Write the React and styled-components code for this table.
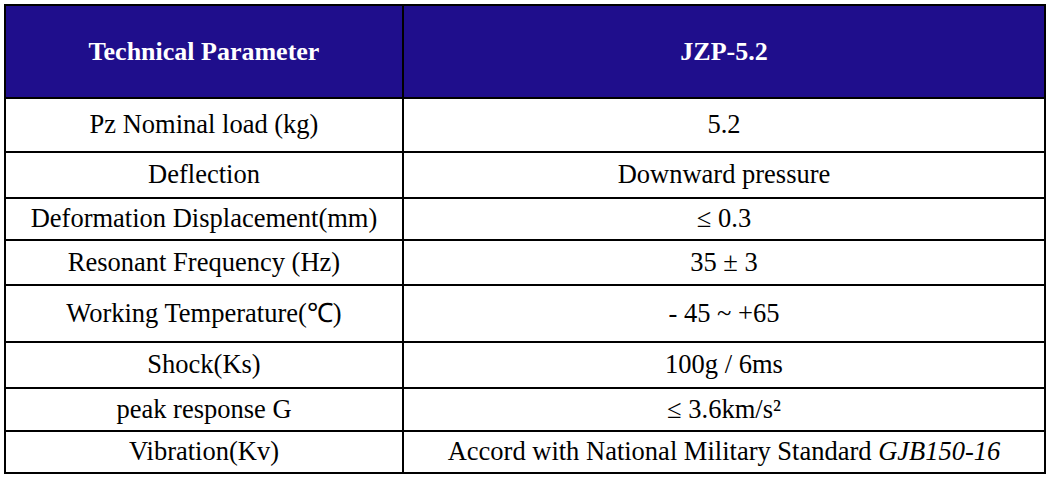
import React from 'react';
import styled, { createGlobalStyle } from 'styled-components';

const serif = '"Liberation Serif", "Times New Roman", serif';

const rows = [
  { label: 'Pz Nominal load (kg)', value: '5.2', height: 54 },
  { label: 'Deflection', value: 'Downward pressure', height: 46 },
  { label: 'Deformation Displacement(mm)', value: '\u2264 0.3', height: 42 },
  { label: 'Resonant Frequency (Hz)', value: '35 \u00b1 3', height: 45 },
  { label: 'Working Temperature(\u2103)', value: '- 45 ~ +65', height: 57 },
  { label: 'Shock(Ks)', value: '100g / 6ms', height: 46 },
  { label: 'peak response G', value: '\u2264 3.6km/s\u00b2', height: 43 },
  {
    label: 'Vibration(Kv)',
    value: (
      <>
        Accord with National Military Standard <em>GJB150-16</em>
      </>
    ),
    height: 42,
  },
];

const App = () => (
  <>
    <GlobalStyle />
    <Page>
      <SpecTable>
        <colgroup>
          <LabelCol />
          <col />
        </colgroup>
        <thead>
          <HeadRow>
            <HeadCell>Technical Parameter</HeadCell>
            <HeadCell>JZP-5.2</HeadCell>
          </HeadRow>
        </thead>
        <tbody>
          {rows.map((row) => (
            <BodyRow key={row.label} $height={row.height}>
              <Cell>{row.label}</Cell>
              <Cell>{row.value}</Cell>
            </BodyRow>
          ))}
        </tbody>
      </SpecTable>
    </Page>
  </>
);

const GlobalStyle = createGlobalStyle`
  body {
    margin: 0;
    background: #fff;
    font-family: ${serif};
  }
`;

const Page = styled.div`
  padding: 4px 5px 6px 4px;
`;

const SpecTable = styled.table`
  width: 1042px;
  table-layout: fixed;
  border-collapse: collapse;
  border: 2px solid #000;
  font-family: ${serif};
`;

const LabelCol = styled.col`
  width: 398px;
`;

const HeadRow = styled.tr`
  height: 93px;
  background: #1f0e8c;
`;

const HeadCell = styled.th`
  border: 2px solid #000;
  padding: 0;
  color: #fff;
  font-family: ${serif};
  font-size: 26px;
  font-weight: bold;
  text-align: center;
  vertical-align: middle;
`;

const BodyRow = styled.tr`
  height: ${(p) => p.$height}px;
`;

const Cell = styled.td`
  border: 2px solid #000;
  padding: 0;
  color: #000;
  font-family: ${serif};
  font-size: 26.5px;
  text-align: center;
  vertical-align: middle;
  line-height: 1.1;

  em {
    font-style: italic;
  }
`;

export default App;
